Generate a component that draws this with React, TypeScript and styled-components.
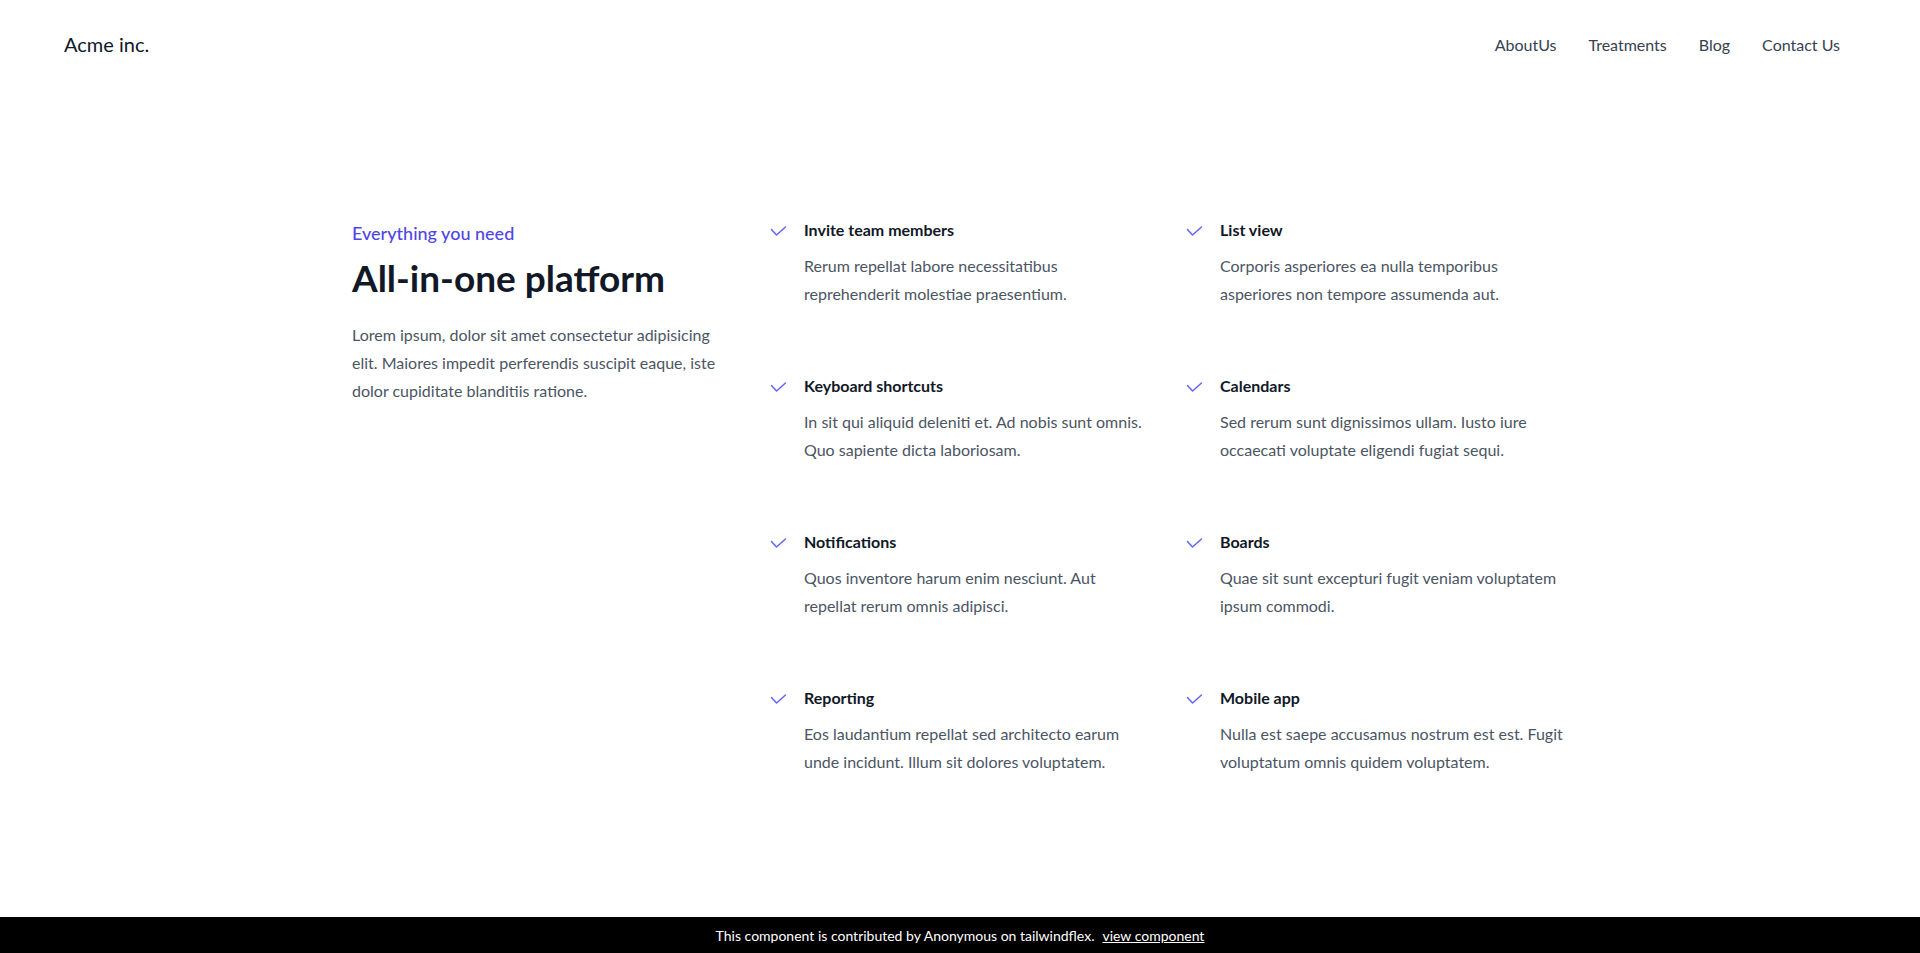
import React from "react";
import styled, { createGlobalStyle } from "styled-components";

const GlobalStyle = createGlobalStyle`
  *, *::before, *::after { box-sizing: border-box; }
  html, body { margin: 0; padding: 0; background: #ffffff; }
  body {
    font-family: Lato, "Noto Sans", "Liberation Sans", sans-serif;
    -webkit-font-smoothing: antialiased;
  }
`;

const Page = styled.div`
  min-height: 100vh;
  display: flex;
  flex-direction: column;
`;

const Header = styled.header`
  height: 88px;
  display: flex;
  align-items: center;
  justify-content: space-between;
  padding: 0 80px 0 64px;
`;

const Brand = styled.a`
  font-size: 20px;
  color: #111827;
  text-decoration: none;
`;

const Nav = styled.nav`
  display: flex;
  align-items: center;
  gap: 32px;
`;

const NavLink = styled.a`
  font-size: 16px;
  color: #374151;
  text-decoration: none;
`;

const Main = styled.main`
  flex: 1;
  padding: 128px 0 96px;
`;

const Container = styled.section`
  max-width: 1280px;
  margin: 0 auto;
  padding: 0 32px;
  display: grid;
  grid-template-columns: repeat(3, 1fr);
  column-gap: 32px;
  align-items: start;
`;

const Intro = styled.div`
  display: flex;
  flex-direction: column;
  padding-top: 3px;
`;

const Eyebrow = styled.h2`
  margin: 0;
  font-size: 18px;
  line-height: 28px;
  font-weight: 500;
  color: #4f46e5;
`;

const Title = styled.p`
  margin: 11px 0 0;
  font-size: 37px;
  line-height: 40px;
  font-weight: 700;
  color: #111827;
`;

const Lead = styled.p`
  margin: 23px 0 0;
  font-size: 16px;
  line-height: 28px;
  color: #4b5563;
`;

const Features = styled.dl`
  grid-column: span 2;
  margin: 0;
  display: grid;
  grid-template-columns: 1fr 1fr;
  column-gap: 32px;
  row-gap: 64px;
`;

const Feature = styled.div`
  display: grid;
  grid-template-columns: 24px 1fr;
  column-gap: 12px;
`;

const IconWrap = styled.span`
  grid-row: 1;
  grid-column: 1;
  height: 28px;
  display: flex;
  align-items: center;
  color: #6366f1;
`;

const FeatureTitle = styled.dt`
  grid-row: 1;
  grid-column: 2;
  font-size: 16px;
  line-height: 28px;
  font-weight: 700;
  color: #111827;
`;

const FeatureText = styled.dd`
  grid-row: 2;
  grid-column: 2;
  margin: 8px 0 0;
  font-size: 16px;
  line-height: 28px;
  color: #4b5563;
`;

const Footer = styled.footer`
  height: 36px;
  background: #000000;
  color: #ffffff;
  display: flex;
  align-items: center;
  justify-content: center;
  font-size: 14px;
`;

const FooterLink = styled.a`
  color: #ffffff;
  text-decoration: underline;
  margin-left: 8px;
`;

const Check = () => (
  <svg width="24" height="24" viewBox="0 0 24 24" fill="none" stroke="currentColor" strokeWidth="1.5" strokeLinecap="round" strokeLinejoin="round">
    <path d="M3.5 11.5l5 5.5L17.5 9" />
  </svg>
);

const features = [
  { title: "Invite team members", text: "Rerum repellat labore necessitatibus reprehenderit molestiae praesentium." },
  { title: "List view", text: "Corporis asperiores ea nulla temporibus asperiores non tempore assumenda aut." },
  { title: "Keyboard shortcuts", text: "In sit qui aliquid deleniti et. Ad nobis sunt omnis. Quo sapiente dicta laboriosam." },
  { title: "Calendars", text: "Sed rerum sunt dignissimos ullam. Iusto iure occaecati voluptate eligendi fugiat sequi." },
  { title: "Notifications", text: "Quos inventore harum enim nesciunt. Aut repellat rerum omnis adipisci." },
  { title: "Boards", text: "Quae sit sunt excepturi fugit veniam voluptatem ipsum commodi." },
  { title: "Reporting", text: "Eos laudantium repellat sed architecto earum unde incidunt. Illum sit dolores voluptatem." },
  { title: "Mobile app", text: "Nulla est saepe accusamus nostrum est est. Fugit voluptatum omnis quidem voluptatem." },
];

export default function App() {
  return (
    <Page>
      <GlobalStyle />
      <Header>
        <Brand href="#">Acme inc.</Brand>
        <Nav>
          <NavLink href="#">AboutUs</NavLink>
          <NavLink href="#">Treatments</NavLink>
          <NavLink href="#">Blog</NavLink>
          <NavLink href="#">Contact Us</NavLink>
        </Nav>
      </Header>
      <Main>
        <Container>
          <Intro>
            <Eyebrow>Everything you need</Eyebrow>
            <Title>All-in-one platform</Title>
            <Lead>
              Lorem ipsum, dolor sit amet consectetur adipisicing elit. Maiores impedit perferendis suscipit eaque, iste dolor cupiditate blanditiis ratione.
            </Lead>
          </Intro>
          <Features>
            {features.map((f) => (
              <Feature key={f.title}>
                <IconWrap>
                  <Check />
                </IconWrap>
                <FeatureTitle>{f.title}</FeatureTitle>
                <FeatureText>{f.text}</FeatureText>
              </Feature>
            ))}
          </Features>
        </Container>
      </Main>
      <Footer>
        This component is contributed by Anonymous on tailwindflex.
        <FooterLink href="#">view component</FooterLink>
      </Footer>
    </Page>
  );
}
